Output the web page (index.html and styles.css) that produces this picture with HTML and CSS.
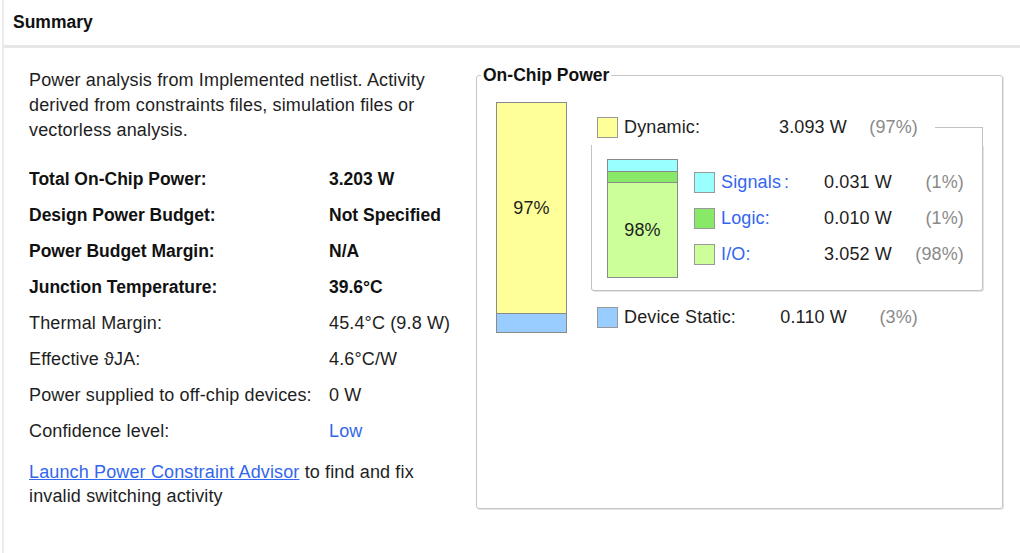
FILE: index.html
```html
<!DOCTYPE html>
<html>
<head>
<meta charset="utf-8">
<link rel="stylesheet" href="styles.css">
</head>
<body>
<div class="panel">
  <div class="header">Summary</div>
  <div class="content">
    <div class="left">
      <p class="intro">Power analysis from Implemented netlist. Activity derived from constraints files, simulation files or vectorless analysis.</p>
      <table class="stats">
        <tr class="strong"><td class="k">Total On-Chip Power:</td><td>3.203 W</td></tr>
        <tr class="strong"><td class="k">Design Power Budget:</td><td>Not Specified</td></tr>
        <tr class="strong"><td class="k">Power Budget Margin:</td><td>N/A</td></tr>
        <tr class="strong"><td class="k">Junction Temperature:</td><td>39.6°C</td></tr>
        <tr><td class="k">Thermal Margin:</td><td>45.4°C (9.8 W)</td></tr>
        <tr><td class="k">Effective &#977;JA:</td><td>4.6°C/W</td></tr>
        <tr><td class="k">Power supplied to off-chip devices:</td><td>0 W</td></tr>
        <tr><td class="k">Confidence level:</td><td><a class="link plain" href="#">Low</a></td></tr>
      </table>
      <p class="advisor"><a class="link" href="#">Launch Power Constraint Advisor</a> to find and fix invalid switching activity</p>
    </div>
    <fieldset class="onchip">
      <legend>On-Chip Power</legend>
      <div class="chart">
        <div class="bar big">
          <div class="seg yellow grow">97%</div>
          <div class="seg blue static-seg"></div>
        </div>
        <div class="breakdown">
          <div class="row">
            <span class="sw yellow"></span>
            <span class="lbl">Dynamic:</span>
            <span class="val">3.093 W</span>
            <span class="pct">(97%)</span>
            <span class="connector"></span>
          </div>
          <div class="subbox">
            <div class="bar small">
              <div class="seg cyan s-sig"></div>
              <div class="seg green s-logic"></div>
              <div class="seg lgreen grow">98%</div>
            </div>
            <div class="sublegend">
              <div class="srow"><span class="sw cyan"></span><span class="slbl"><a class="link plain" href="#">Signals</a><span class="colon gap">:</span></span><span class="sval">0.031 W</span><span class="spct">(1%)</span></div>
              <div class="srow"><span class="sw green"></span><span class="slbl"><a class="link plain" href="#">Logic</a><span class="colon">:</span></span><span class="sval">0.010 W</span><span class="spct">(1%)</span></div>
              <div class="srow"><span class="sw lgreen"></span><span class="slbl"><a class="link plain" href="#">I/O</a><span class="colon">:</span></span><span class="sval">3.052 W</span><span class="spct">(98%)</span></div>
            </div>
          </div>
          <div class="row device">
            <span class="sw blue"></span>
            <span class="lbl">Device Static:</span>
            <span class="val">0.110 W</span>
            <span class="pct">(3%)</span>
          </div>
        </div>
      </div>
    </fieldset>
  </div>
</div>
</body>
</html>
```

FILE: styles.css
```css
* { box-sizing: border-box; }
html, body {
  margin: 0;
  padding: 0;
  background: #ffffff;
}
body {
  font-family: "Liberation Sans", Arial, sans-serif;
  font-size: 18px;
  letter-spacing: 0.14px;
  color: #1e1e1e;
  width: 1020px;
  height: 553px;
  overflow: hidden;
}
.panel {
  margin-left: 2px;
  border-left: 2px solid #ebebeb;
  height: 553px;
}
.header {
  height: 48px;
  border-bottom: 3px solid #e6e6e6;
  padding: 12px 0 0 9px;
  font-weight: bold;
  font-size: 17.5px;
  letter-spacing: 0;
  line-height: 20px;
  color: #111;
}
.content {
  display: flex;
  align-items: flex-start;
}
.left {
  width: 472px;
  padding: 20px 0 0 25px;
}
.intro {
  margin: 0;
  width: 425px;
  line-height: 25px;
}
.stats {
  border-collapse: collapse;
  margin-top: 18px;
}
.stats td {
  padding: 0;
  height: 36px;
  vertical-align: middle;
  white-space: nowrap;
}
.stats td.k {
  width: 300px;
}
.stats tr.strong td {
  font-weight: bold;
  font-size: 17.5px;
  letter-spacing: 0;
  color: #111;
}
.link {
  color: #3366ee;
}
.link.plain {
  text-decoration: none;
}
.advisor {
  margin: 11px 0 0 0;
  width: 425px;
  line-height: 24px;
}

/* On-Chip Power fieldset */
.onchip {
  margin: 17px 0 0 0;
  padding: 17px 0 175px 19px;
  width: 527px;
  border: 1px solid #c6c6c6;
  border-radius: 3px;
  box-shadow: 1px 1px 0 #e4e4e4;
  min-width: 0;
}
.onchip legend {
  margin-left: -15px;
  padding: 0 2px;
  font-weight: bold;
  font-size: 17.5px;
  letter-spacing: 0;
  line-height: 20px;
  color: #111;
}
.chart {
  display: flex;
  align-items: flex-start;
}
.bar {
  display: flex;
  flex-direction: column;
  border: 1px solid #8a8a8a;
  flex-shrink: 0;
}
.bar.big {
  width: 71px;
  height: 231px;
}
.bar.small {
  width: 71px;
  height: 119px;
}
.seg {
  display: flex;
  align-items: center;
  justify-content: center;
  font-size: 18px;
  color: #1e1e1e;
}
.seg + .seg {
  border-top: 1px solid #8a8a8a;
}
.seg.grow { flex: 1; }
.static-seg { height: 19px; }
.s-sig { height: 11px; }
.s-logic { height: 11px; }

.yellow { background: #ffff99; }
.blue { background: #99ccff; }
.cyan { background: #99ffff; }
.green { background: #88e868; }
.lgreen { background: #ccff99; }

.breakdown {
  margin-left: 24px;
  width: 392px;
  flex-shrink: 0;
}
.row {
  display: flex;
  align-items: center;
  height: 20px;
  padding-left: 6px;
  margin-top: 15px;
  white-space: nowrap;
}
.row.device {
  margin-top: 16px;
}
.sw {
  display: inline-block;
  width: 21px;
  height: 21px;
  border: 1px solid #999999;
  flex-shrink: 0;
}
.lbl {
  margin-left: 6px;
  width: 143px;
}
.val {
  width: 80px;
  text-align: right;
}
.pct {
  width: 71px;
  text-align: right;
  color: #8a8a8a;
}
.connector {
  flex: 1;
  align-self: flex-start;
  margin-top: 10px;
  margin-left: 17px;
  height: 1px;
  background: #c2c2c2;
}
.subbox {
  position: relative;
  margin-top: 8px;
  display: flex;
  align-items: flex-start;
  padding: 14px 0 12px 15px;
  border: 1px solid #c2c2c2;
  border-top: none;
  border-radius: 0 0 3px 3px;
  box-shadow: 1px 1px 0 #e4e4e4;
}
.subbox::before {
  content: "";
  position: absolute;
  top: -18px;
  right: -1px;
  width: 1px;
  height: 18px;
  background: #c2c2c2;
}
.sublegend {
  margin-left: 16px;
  margin-top: 13px;
  display: flex;
  flex-direction: column;
  gap: 15px;
}
.srow {
  display: flex;
  align-items: center;
  height: 21px;
  white-space: nowrap;
}
.slbl {
  margin-left: 6px;
  width: 91px;
  color: #3366ee;
}
.colon { color: #3366ee; }
.colon.gap { margin-left: 3px; }
.sval {
  width: 80px;
  text-align: right;
}
.spct {
  width: 72px;
  text-align: right;
  color: #8a8a8a;
}
```
